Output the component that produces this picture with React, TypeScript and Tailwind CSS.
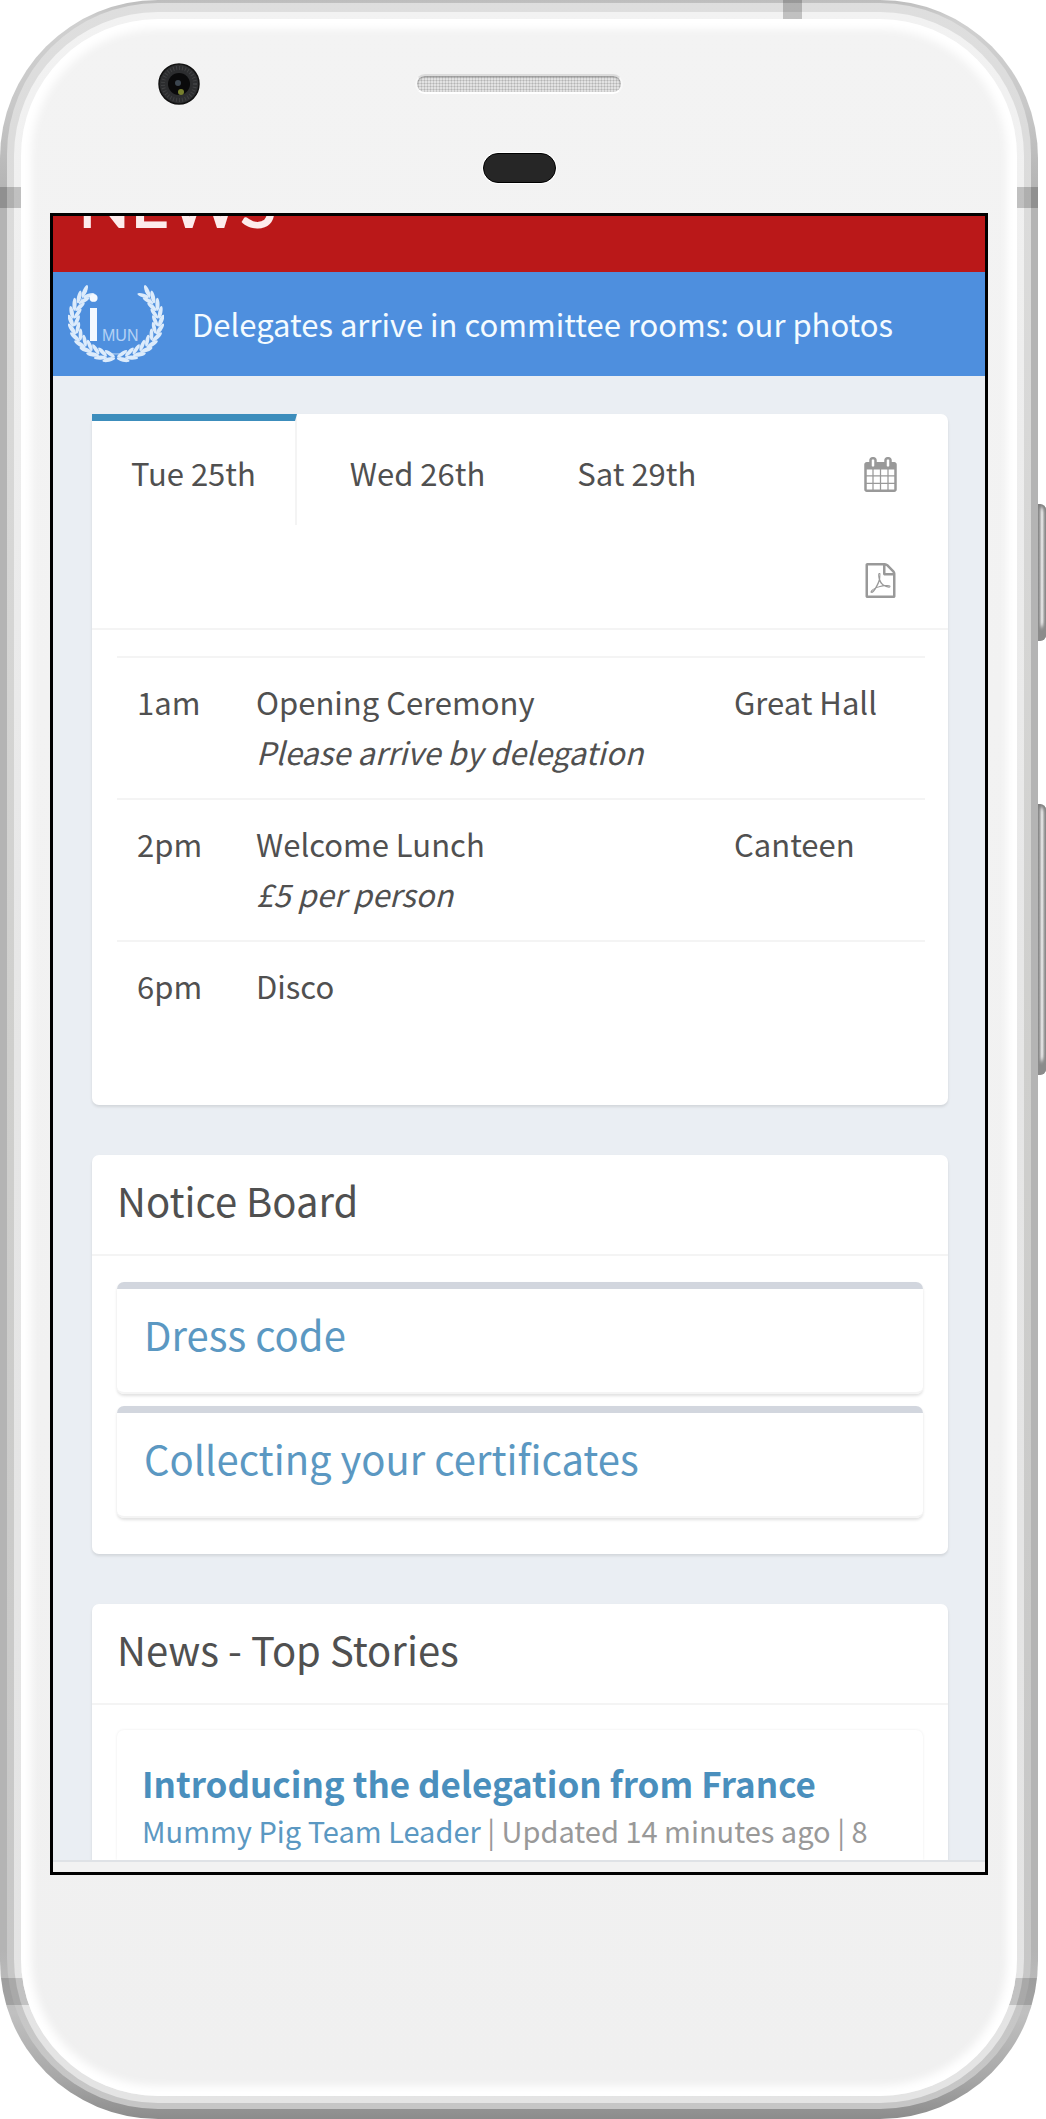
import React from "react";

const SANS = "font-['Noto_Sans_CJK_SC','Noto_Sans',sans-serif]";

const schedule = [
  { time: "1am", title: "Opening Ceremony", note: "Please arrive by delegation", place: "Great Hall" },
  { time: "2pm", title: "Welcome Lunch", note: "£5 per person", place: "Canteen" },
  { time: "6pm", title: "Disco", note: "", place: "" },
];

const notices = ["Dress code", "Collecting your certificates"];
const days = ["Tue 25th", "Wed 26th", "Sat 29th"];

function CalendarIcon() {
  return (
    <svg viewBox="0 0 1792 1792" className="size-[35px] fill-current" aria-hidden="true">
      <path d="M192 1664h288v-288h-288v288zm352 0h320v-288h-320v288zm-352-352h288v-320h-288v320zm352 0h320v-320h-320v320zm-352-384h288v-288h-288v288zm736 736h320v-288h-320v288zm-384-736h320v-288h-320v288zm768 736h288v-288h-288v288zm-384-352h320v-320h-320v320zm-352-864v-288q0-13-9.500-22.500t-22.500-9.500h-64q-13 0-22.500 9.500t-9.500 22.500v288q0 13 9.500 22.500t22.500 9.500h64q13 0 22.500-9.500t9.500-22.500zm736 864h288v-320h-288v320zm-384-384h320v-288h-320v288zm384 0h288v-288h-288v288zm32-480v-288q0-13-9.500-22.500t-22.500-9.500h-64q-13 0-22.500 9.500t-9.500 22.500v288q0 13 9.500 22.500t22.500 9.500h64q13 0 22.500-9.500t9.500-22.500zm384-64v1280q0 52-38 90t-90 38h-1408q-52 0-90-38t-38-90v-1280q0-52 38-90t90-38h128v-96q0-66 47-113t113-47h64q66 0 113 47t47 113v96h384v-96q0-66 47-113t113-47h64q66 0 113 47t47 113v96h128q52 0 90 38t38 90z" />
    </svg>
  );
}

function PdfIcon() {
  return (
    <svg viewBox="0 0 1792 1792" className="size-[35px] fill-current" aria-hidden="true">
      <path d="M1596 380q28 28 48 76t20 88v1152q0 40-28 68t-68 28h-1344q-40 0-68-28t-28-68v-1600q0-40 28-68t68-28h896q40 0 88 20t76 48zm-444-244v376h376q-10-29-22-41l-313-313q-12-12-41-22zm384 1528v-1024h-416q-40 0-68-28t-28-68v-416h-768v1536h1280zm-514-593q33 26 84 56 59-7 117-7 147 0 177 49 16 22 2 52 0 1-1 2l-2 2v1q-6 38-71 38-48 0-115-20t-130-53q-221 24-392 83-153 262-242 262-15 0-28-7l-24-12q-1-1-6-5-10-10-6-36 9-40 56-91.500t132-96.500q14-9 23 6 2 2 2 4 52-85 107-197 68-136 104-262-24-82-30.500-159.500t6.500-127.500q11-40 42-40h22q23 0 35 15 18 21 9 68-2 6-4 8 1 3 1 8v30q-2 123-14 192 55 164 146 238zm-576 411q52-24 137-158-51 40-87.500 84t-49.500 74zm398-920q-15 42-2 132 1-7 7-44 0-3 7-43 1-4 4-8-1-1-1-2-1-2-1-3-1-22-13-36 0 1-1 2v2zm-124 661q135-54 284-81-2-1-13-9.500t-16-13.500q-76-67-127-176-27 86-83 197-30 56-45 83zm646-16q-24-24-140-24 76 28 124 28 14 0 18-1 0-1-2-3z" />
    </svg>
  );
}

function Branch() {
  const leaves = [101, 112, 123, 134, 145, 157, 169, 181, 193, 205, 217, 228];
  return (
    <g>
      <path d="M48 70C27 70 11 56 9 37 8 25 13 14 19 7" fill="none" stroke="#b9d6f6" strokeWidth="1" />
      {leaves.map((deg) => {
        const a = (deg * Math.PI) / 180;
        const x = 48 + 42 * Math.cos(a);
        const y = 36 + 37 * Math.sin(a);
        return (
          <g key={deg} transform={`translate(${x} ${y}) rotate(${deg + 90})`} fill="#dcebfb">
            <ellipse cx="0" cy="-3.400" rx="6.500" ry="2.100" transform="rotate(-24)" />
            <ellipse cx="0" cy="3.200" rx="6" ry="1.900" transform="rotate(24)" />
          </g>
        );
      })}
    </g>
  );
}

function Logo() {
  return (
    <svg viewBox="0 0 96 80" className="h-20 w-24 shrink-0" role="img" aria-label="iMUN">
      <Branch />
      <g transform="translate(96 0) scale(-1 1)">
        <Branch />
      </g>
      <text x="17" y="57" fontFamily="Open Sans, sans-serif" fontWeight="600" fontSize="61" fill="#f4f9ff">
        i
      </text>
      <text x="34" y="57" fontFamily="Liberation Sans, sans-serif" fontSize="16" fill="#b4d2f5">
        MUN
      </text>
    </svg>
  );
}

function Card({ title, children, open }: { title?: string; children: React.ReactNode; open?: boolean }) {
  return (
    <section
      className={
        open
          ? "rounded-t-[7px] bg-white shadow-[0_2px_3px_rgba(0,0,0,0.1)]"
          : "rounded-[7px] bg-white shadow-[0_2px_3px_rgba(0,0,0,0.1)]"
      }
    >
      {title && (
        <h2 className="border-b-2 border-[#f4f4f4] px-[25px] pt-[17px] pb-[25px] text-[40px] leading-[57px] text-[#505050]">
          {title}
        </h2>
      )}
      {children}
    </section>
  );
}

function Screen() {
  return (
    <div className={`border-3 border-black bg-[#eaeef3] text-[31px] leading-[50px] text-[#505050] ${SANS}`}>
      <header className="flex h-14 items-end overflow-hidden bg-[#ba1819] px-[25px] pb-[36px]">
        <h1 className="font-[Lato] text-[68px] leading-[68px] font-semibold text-[#fdecec]">NEWS</h1>
      </header>
      <a href="#photos" className="flex items-center gap-[28px] bg-[#4e8fde] px-[15px] py-3 text-[#f4fbff]">
        <Logo />
        <span>Delegates arrive in committee rooms: our photos</span>
      </a>

      <main className="flex flex-col gap-[50px] pt-[38px] pr-[37px] pl-[39px]">
        <Card>
          <div className="flex items-start justify-between border-b-2 border-[#f4f4f4] pr-[50px]">
            <div role="tablist" className="flex gap-[14px]">
              {days.map((day, i) => (
                <button
                  key={day}
                  type="button"
                  role="tab"
                  aria-selected={i === 0}
                  className={
                    i === 0
                      ? "border-t-[7px] border-r-2 border-t-[#3c8dbc] border-r-[#f4f4f4] px-[39px] pt-[27px] pb-[27px]"
                      : "border-t-[7px] border-transparent px-[39px] pt-[27px] pb-[27px]"
                  }
                >
                  {day}
                </button>
              ))}
            </div>
            <div className="flex flex-col gap-[71px] pt-[43px] pb-[30px] text-[#999]">
              <a href="#calendar" aria-label="Calendar">
                <CalendarIcon />
              </a>
              <a href="#pdf" aria-label="Download PDF">
                <PdfIcon />
              </a>
            </div>
          </div>
          <div className="pt-[26px] pr-[23px] pb-[73px] pl-[25px]">
            <table className="w-full table-fixed">
              <tbody>
                {schedule.map((row) => (
                  <tr key={row.time} className="border-t-2 border-[#f4f4f4] align-top">
                    <td className="w-[119px] pt-[19px] pb-[21px] pl-5">{row.time}</td>
                    <td className="w-[478px] pt-[19px] pb-[21px] pl-5">
                      {row.title}
                      {row.note && <em className="block">{row.note}</em>}
                    </td>
                    <td className="pt-[19px] pb-[21px] pl-5">{row.place}</td>
                  </tr>
                ))}
              </tbody>
            </table>
          </div>
        </Card>

        <Card title="Notice Board">
          <div className="flex flex-col gap-3 px-[25px] pt-[26px] pb-[36px]">
            {notices.map((notice) => (
              <div
                key={notice}
                className="rounded-[7px] border-t-[7px] border-b-2 border-t-[#d2d6de] border-b-[#f4f4f4] px-[27px] pt-[17px] pb-[29px] text-[40px] leading-[57px] shadow-[0_2px_3px_rgba(0,0,0,0.12)]"
              >
                <a href="#notice" className="text-[#5b98c2]">
                  {notice}
                </a>
              </div>
            ))}
          </div>
        </Card>

        <Card title="News - Top Stories" open>
          <div className="px-[25px] pt-[25px]">
            <article className="rounded-t-[7px] px-[25px] pt-[28px] shadow-[0_0_3px_rgba(0,0,0,0.08)]">
              <h3 className="text-[35px] leading-[50px] font-bold">
                <a href="#story" className="text-[#4a8fbd]">
                  Introducing the delegation from France
                </a>
              </h3>
              <p className="pb-2 text-[29px] leading-[44px] text-[#999]">
                <a href="#author" className="text-[#5b98c2]">
                  Mummy Pig Team Leader
                </a>{" "}
                | Updated 14 minutes ago | 8
              </p>
            </article>
          </div>
        </Card>
      </main>
      <div className="relative h-3 border-t-2 border-[#dfe2e6] bg-[#f2f2f2]" />
    </div>
  );
}

export default function App() {
  return (
    <div className="bg-white">
      <div className="relative pr-2">
        <div className="absolute top-[504px] right-0 h-[137px] w-2 rounded-r-[6px] bg-linear-to-r from-[#8a8a8a] via-[#fafafa] to-[#8a8a8a] shadow-[inset_0_-14px_4px_#8b8b8b,inset_0_3px_4px_#777]" />
        <div className="absolute top-[804px] right-0 h-[271px] w-2 rounded-r-[6px] bg-linear-to-r from-[#8a8a8a] via-[#fafafa] to-[#8a8a8a] shadow-[inset_0_-14px_4px_#8b8b8b,inset_0_3px_4px_#777]" />

        <div className="relative overflow-hidden rounded-[158px] bg-[linear-gradient(#bdbdbd,#d0d0d0_1%,#c8c8c8_5%,#b4b4b4_9%,#b4b4b4_92%,#c0c0c0_95%,#a8a8a8_98%,#8c8c8c)] px-[7px] pt-[3px] pb-[10px]">
          <div className="rounded-[151px] bg-linear-to-b from-[#dedede] via-[#cfcfcd] to-[#c6c6c6] px-[7px] pt-[9px] pb-[6px]">
            <div className="rounded-[144px] bg-linear-to-b from-[#f2f2f2] via-[#e6e6e6] to-[#e4e4e4] p-[7px]">
              <div className="absolute top-0 right-[236px] h-6 w-[19px] bg-black/20" />
              <div className="absolute top-[187px] left-0 h-[21px] w-full bg-black/20" />
              <div className="absolute bottom-[114px] left-0 h-[27px] w-full bg-black/15" />

              <div className="relative rounded-[137px] bg-linear-to-b from-[#f3f3f3] to-[#f0f0f0] px-[29px] pb-[221px] shadow-[inset_0_0_8px_10px_#fff]">
                <div className="grid grid-cols-[1fr_auto_1fr] items-center pt-[44px]">
                  <div className="pl-[108px]">
                    <svg viewBox="0 0 42 42" className="size-[42px]" aria-hidden="true">
                      <circle cx="21" cy="21" r="21" fill="#fff" />
                      <circle cx="21" cy="21" r="20" fill="#2c2d2f" stroke="#111" strokeWidth="1.500" />
                      <circle cx="21" cy="21" r="16" fill="none" stroke="#404143" strokeWidth="4" strokeDasharray="1 2" />
                      <circle cx="21" cy="21" r="11" fill="#0a0a0b" />
                      <circle cx="20" cy="20" r="3" fill="#3c4650" />
                      <circle cx="23" cy="29" r="3" fill="#77802f" />
                    </svg>
                  </div>
                  <div className="h-[20px] w-[208px] rounded-full border-2 border-t-[#dcdcdc] border-r-[#f8f8f8] border-b-white border-l-[#f8f8f8] bg-[#d6d6d6] bg-[radial-gradient(#b4b4b4_35%,#e2e2e2_60%)] bg-[size:3px_3px] shadow-[inset_0_1px_2px_#8a8a8a]" />
                </div>
                <div className="mx-auto mt-[48px] mb-[30px] h-[30px] w-[73px] rounded-full border border-black bg-[#262626] shadow-[0_0_0_1px_#fff]" />
                <Screen />
              </div>
            </div>
          </div>
        </div>
      </div>
    </div>
  );
}
